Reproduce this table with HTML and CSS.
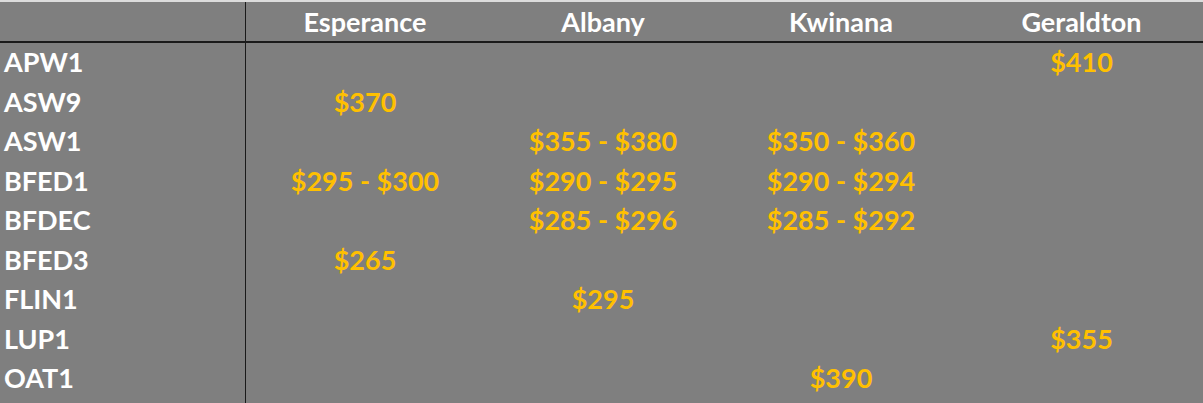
FILE: index.html
```html
<!DOCTYPE html>
<html>
<head>
<meta charset="utf-8">
<link rel="stylesheet" href="styles.css">
</head>
<body>
<table class="prices">
  <thead>
    <tr><th class="corner"></th><th>Esperance</th><th>Albany</th><th>Kwinana</th><th class="last">Geraldton</th></tr>
  </thead>
  <tbody>
    <tr><th>APW1</th><td></td><td></td><td></td><td>$410</td></tr>
    <tr><th>ASW9</th><td>$370</td><td></td><td></td><td></td></tr>
    <tr><th>ASW1</th><td></td><td>$355 - $380</td><td>$350 - $360</td><td></td></tr>
    <tr><th>BFED1</th><td>$295 - $300</td><td>$290 - $295</td><td>$290 - $294</td><td></td></tr>
    <tr><th>BFDEC</th><td></td><td>$285 - $296</td><td>$285 - $292</td><td></td></tr>
    <tr><th>BFED3</th><td>$265</td><td></td><td></td><td></td></tr>
    <tr><th>FLIN1</th><td></td><td>$295</td><td></td><td></td></tr>
    <tr><th>LUP1</th><td></td><td></td><td></td><td>$355</td></tr>
    <tr class="end"><th>OAT1</th><td></td><td></td><td>$390</td><td></td></tr>
  </tbody>
</table>
</body>
</html>
```
FILE: styles.css
```css
html, body {
  margin: 0;
  padding: 0;
  background: #7f7f7f;
}
body {
  width: 1203px;
  height: 403px;
  overflow: hidden;
  border-top: 2px solid #dcdcdc;
  box-sizing: border-box;
  font-family: Lato, "Liberation Sans", sans-serif;
  font-weight: 700;
}
.prices {
  border-collapse: collapse;
  table-layout: fixed;
  width: 1203px;
}
.prices th, .prices td {
  padding: 0 0 2px 0;
  font-size: 27px;
  line-height: 37.5px;
  height: 37.5px;
  white-space: nowrap;
}
.prices tr.end th, .prices tr.end td {
  padding-bottom: 10px;
}
.prices thead th {
  color: #ffffff;
  text-align: center;
  height: 39px;
  line-height: 39px;
  padding: 0;
  border-bottom: 2px solid #1a1a1a;
  width: 238px;
}
.prices thead th.corner {
  width: 245px;
}
.prices thead th.last {
  width: 243px;
}
.prices tbody th {
  color: #ffffff;
  text-align: left;
  padding-left: 4px;
}
.prices .corner, .prices tbody th {
  border-right: 1px solid #1a1a1a;
}
.prices td {
  color: #ffc000;
  text-align: center;
}
```
